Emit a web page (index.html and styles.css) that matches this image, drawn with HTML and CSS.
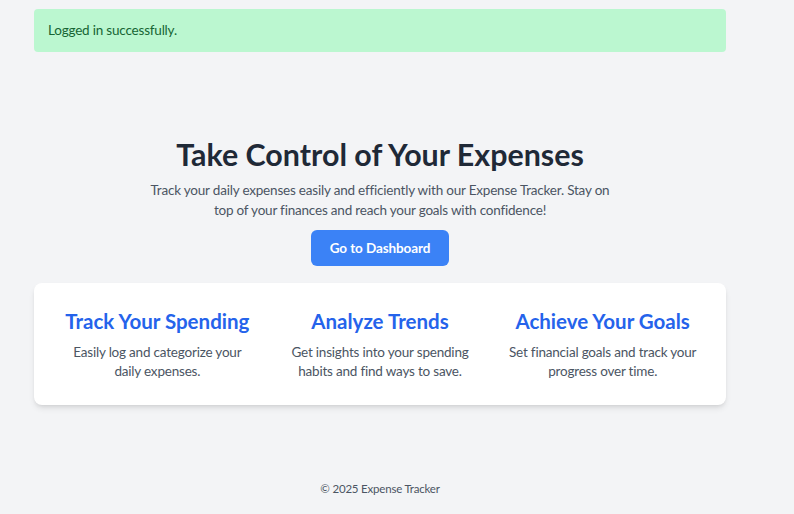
FILE: index.html
```html
<!DOCTYPE html>
<html lang="en">
<head>
<meta charset="utf-8">
<title>Expense Tracker</title>
<link rel="stylesheet" href="styles.css">
</head>
<body>
<main class="container">
  <div class="alert">Logged in successfully.</div>
  <section class="hero">
    <h1 class="hero-title">Take Control of Your Expenses</h1>
    <p class="hero-text">Track your daily expenses easily and efficiently with our Expense Tracker. Stay on top of your finances and reach your goals with confidence!</p>
    <a class="btn" href="#">Go to Dashboard</a>
  </section>
  <section class="features">
    <div class="feature">
      <h2 class="feature-title">Track Your Spending</h2>
      <p class="feature-text">Easily log and categorize your daily expenses.</p>
    </div>
    <div class="feature">
      <h2 class="feature-title">Analyze Trends</h2>
      <p class="feature-text">Get insights into your spending habits and find ways to save.</p>
    </div>
    <div class="feature">
      <h2 class="feature-title">Achieve Your Goals</h2>
      <p class="feature-text">Set financial goals and track your progress over time.</p>
    </div>
  </section>
  <footer class="footer">© 2025 Expense Tracker</footer>
</main>
</body>
</html>
```
FILE: styles.css
```css
* { box-sizing: border-box; }
html, body { margin: 0; padding: 0; }
body {
  background: #f3f4f6;
  font-family: "Lato", "Open Sans", sans-serif;
  color: #1f2937;
}
.container {
  width: 692px;
  margin-left: 34px;
  padding-top: 9px;
}
.alert {
  background: #bbf7d0;
  color: #166534;
  border-radius: 4px;
  padding: 12px 14px;
  font-size: 13.5px;
  letter-spacing: -0.2px;
  line-height: 19px;
  height: 43px;
}
.hero {
  display: flex;
  flex-direction: column;
  align-items: center;
  text-align: center;
  margin-top: 84px;
}
.hero-title {
  margin: 0;
  font-size: 30.4px;
  line-height: 36px;
  font-weight: 700;
  color: #1f2937;
}
.hero-text {
  margin: 8px 0 0;
  width: 462px;
  font-size: 13.5px;
  letter-spacing: -0.2px;
  line-height: 20px;
  color: #4b5563;
}
.btn {
  margin-top: 10px;
  display: inline-flex;
  align-items: center;
  justify-content: center;
  width: 138px;
  height: 36px;
  background: #3b82f6;
  color: #fff;
  border-radius: 6px;
  font-size: 13.5px;
  letter-spacing: -0.1px;
  font-weight: 700;
  text-decoration: none;
}
.features {
  margin-top: 17px;
  background: #fff;
  border-radius: 8px;
  box-shadow: 0 4px 6px -1px rgba(0,0,0,0.1), 0 2px 4px -2px rgba(0,0,0,0.1);
  padding: 24px;
  display: grid;
  grid-template-columns: repeat(3, 1fr);
  gap: 24px;
  text-align: center;
}
.feature-title {
  margin: 0 0 8px;
  font-size: 20.5px;
  line-height: 28px;
  font-weight: 700;
  color: #2563eb;
}
.feature-text {
  margin: 0;
  padding: 0 4px;
  font-size: 13.5px;
  letter-spacing: -0.2px;
  line-height: 19px;
  color: #4b5563;
}
.footer {
  margin-top: 76px;
  text-align: center;
  font-size: 11.5px;
  letter-spacing: -0.2px;
  line-height: 16px;
  color: #4b5563;
}
```
